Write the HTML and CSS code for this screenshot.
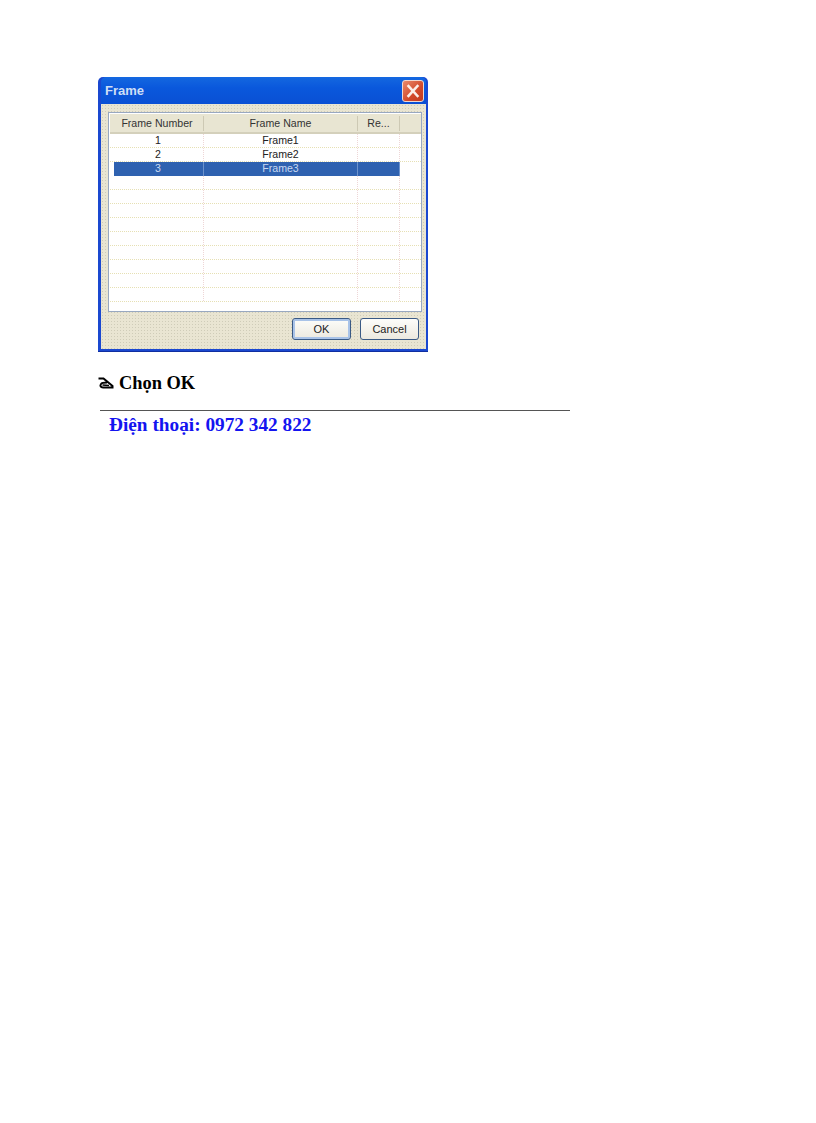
FILE: index.html
```html
<!DOCTYPE html>
<html lang="vi">
<head>
    <meta charset="UTF-8">
    <title>Frame</title>
    <link rel="stylesheet" href="styles.css">
</head>
<body>

    <div class="window">
        <div class="titlebar">
            <span class="title">Frame</span>
            <div class="close-btn">
                <svg width="20" height="20" viewBox="0 0 20 20">
                    <path d="M5.5 5 L14.5 15 M14.5 5 L5.5 15" stroke="#fbeee8" stroke-width="2.6" stroke-linecap="square"/>
                </svg>
            </div>
        </div>
        <div class="content">
            <div class="list">
                <div class="list-head">
                    <div class="col-number">Frame Number</div>
                    <div class="col-name">Frame Name</div>
                    <div class="col-re">Re...</div>
                    <div class="col-rest"></div>
                </div>
                <div class="row">
                    <div class="col-number">1</div>
                    <div class="col-name">Frame1</div>
                    <div class="col-re"></div>
                    <div class="col-rest"></div>
                </div>
                <div class="row">
                    <div class="col-number">2</div>
                    <div class="col-name">Frame2</div>
                    <div class="col-re"></div>
                    <div class="col-rest"></div>
                </div>
                <div class="row selected">
                    <div class="col-number">3</div>
                    <div class="col-name">Frame3</div>
                    <div class="col-re"></div>
                    <div class="col-rest"></div>
                </div>
                <div class="row"><div class="col-number"></div><div class="col-name"></div><div class="col-re"></div><div class="col-rest"></div></div>
                <div class="row"><div class="col-number"></div><div class="col-name"></div><div class="col-re"></div><div class="col-rest"></div></div>
                <div class="row"><div class="col-number"></div><div class="col-name"></div><div class="col-re"></div><div class="col-rest"></div></div>
                <div class="row"><div class="col-number"></div><div class="col-name"></div><div class="col-re"></div><div class="col-rest"></div></div>
                <div class="row"><div class="col-number"></div><div class="col-name"></div><div class="col-re"></div><div class="col-rest"></div></div>
                <div class="row"><div class="col-number"></div><div class="col-name"></div><div class="col-re"></div><div class="col-rest"></div></div>
                <div class="row"><div class="col-number"></div><div class="col-name"></div><div class="col-re"></div><div class="col-rest"></div></div>
                <div class="row"><div class="col-number"></div><div class="col-name"></div><div class="col-re"></div><div class="col-rest"></div></div>
                <div class="row"><div class="col-number"></div><div class="col-name"></div><div class="col-re"></div><div class="col-rest"></div></div>
            </div>
            <div class="buttons">
                <button class="btn btn-default">OK</button>
                <button class="btn">Cancel</button>
            </div>
        </div>
    </div>

    <div class="choose">
        <svg class="hand" width="16" height="12" viewBox="0 0 16 12">
            <path d="M0.5 1.5 L5.5 1.5 L14.5 9 L14.5 10.5 L5 10.5 C2.5 10.5 1.8 8.5 3 7 C4 5.5 6 5.5 9 5.5" fill="none" stroke="#000" stroke-width="2"/>
            <path d="M4.5 8 L11 8.5" stroke="#000" stroke-width="1.5"/>
        </svg>
        <span>Chọn OK</span>
    </div>

    <div class="divider"></div>
    <div class="phone">Điện thoại: 0972 342 822</div>

</body>
</html>
```

FILE: styles.css
```css
body {
    margin: 0;
    padding: 77px 0 0 98px;
    background-color: #fff;
    font-family: "Liberation Serif", serif;
}

.window {
    width: 330px;
    height: 275px;
    box-sizing: border-box;
    display: flex;
    flex-direction: column;
    background-color: #1a48d0;
    border-radius: 5px 5px 0 0;
    padding: 0 2px 2px 3px;
    border-bottom: 1px solid #0f2ea0;
}

.titlebar {
    height: 27px;
    flex-shrink: 0;
    display: flex;
    align-items: center;
    justify-content: space-between;
    padding: 0 2px 0 4px;
    background: linear-gradient(#1468e0, #0a58dc 40%, #0a50d4);
    border-radius: 5px 5px 0 0;
}

.title {
    font-family: "Liberation Sans", Arial, sans-serif;
    font-size: 13px;
    font-weight: bold;
    color: #cfdff5;
}

.close-btn {
    width: 20px;
    height: 20px;
    border: 1px solid #f0d8d0;
    border-radius: 3px;
    background: linear-gradient(135deg, #e98a6c, #d2492a 60%, #c23a1e);
    display: flex;
}

.content {
    flex: 1;
    background-color: #e9e5d2;
    background-image: radial-gradient(#cfccb8 0.7px, transparent 0.8px);
    background-size: 3px 3px;
    padding: 8px 4px 0 7px;
}

.list {
    height: 200px;
    box-sizing: border-box;
    border: 1px solid #98a8c0;
    background-color: #fff;
    padding: 1px 0 0 1px;
    font-family: "Liberation Sans", Arial, sans-serif;
    font-size: 10.6px;
    color: #222;
}

.list-head {
    display: flex;
    height: 20px;
    align-items: center;
    background-color: #e8e5d2;
    border-bottom: 2px solid #d4d0bb;
    box-sizing: border-box;
    text-align: center;
    color: #333;
}

.list-head > div {
    height: 15px;
    line-height: 15px;
    border-right: 1px solid #cdc9b4;
    box-sizing: border-box;
}

.list-head .col-number {
    padding-left: 1px;
}

.list-head .col-rest {
    border-right: none;
}

.row {
    display: flex;
    height: 14px;
    line-height: 13px;
    text-align: center;
    box-sizing: border-box;
    border-bottom: 1px dotted #e6e0b4;
}

.row > div {
    box-sizing: border-box;
    border-right: 1px dotted #eed6d6;
}

.row .col-number {
    padding-left: 3px;
}

.row .col-rest {
    border-right: none;
}

.row.selected {
    color: #c8d8f0;
    border-bottom: none;
}

.row.selected .col-number {
    background: linear-gradient(to right, #fff 4px, #2f62b0 4px);
    border-right: 1px solid #6d93cc;
}

.row.selected .col-name,
.row.selected .col-re {
    background-color: #2f62b0;
    border-right: 1px solid #6d93cc;
}

.col-number {
    width: 94px;
}

.col-name {
    width: 154px;
}

.col-re {
    width: 42px;
}

.col-rest {
    flex: 1;
}

.buttons {
    display: flex;
    justify-content: flex-end;
    gap: 9px;
    margin-top: 6px;
    padding-right: 3px;
}

.btn {
    width: 59px;
    height: 22px;
    padding: 0;
    font-family: "Liberation Sans", Arial, sans-serif;
    font-size: 11px;
    color: #222;
    background: linear-gradient(#fdfdfa, #ece9df);
    border: 1px solid #3a5a85;
    border-radius: 3px;
}

.btn-default {
    box-shadow: inset 0 0 0 2px #a9c3e8;
}

.choose {
    display: flex;
    align-items: center;
    gap: 5px;
    margin-top: 21px;
    height: 20px;
    font-size: 18.4px;
    font-weight: bold;
    color: #000;
}

.hand {
    flex-shrink: 0;
}

.divider {
    width: 470px;
    height: 0;
    margin: 17px 0 0 2px;
    border-top: 1px solid #555;
}

.phone {
    margin: 3px 0 0 11px;
    font-size: 19.3px;
    line-height: 22px;
    font-weight: bold;
    color: #1414f0;
}
```
